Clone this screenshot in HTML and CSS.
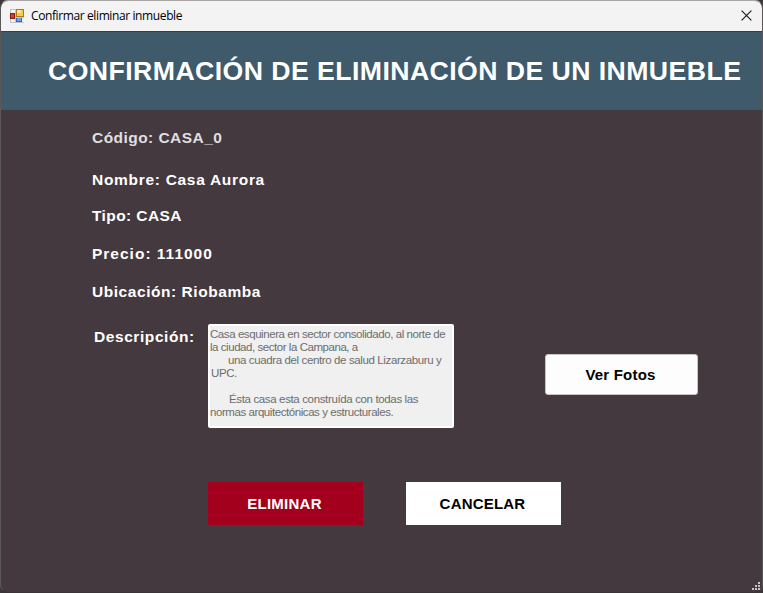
FILE: index.html
```html
<!DOCTYPE html>
<html lang="es">
<head>
<meta charset="utf-8">
<title>Confirmar eliminar inmueble</title>
<link rel="stylesheet" href="styles.css">
</head>
<body>
<div class="window">
  <div class="titlebar">
    <svg class="app-icon" width="14" height="14" viewBox="0 0 14 14" shape-rendering="crispEdges">
      <rect width="14" height="14" fill="#c4c4c4"/>
      <rect x="1" y="1" width="4" height="3" fill="#f4f4f4"/>
      <rect x="1" y="10" width="4" height="3" fill="#f4f4f4"/>
      <rect x="12" y="9" width="2" height="4" fill="#eeeeee"/>
      <rect x="0" y="4" width="5" height="6" fill="#8e1a12"/>
      <rect x="1" y="5" width="3" height="4" fill="#cf3e2c"/>
      <rect x="6" y="0" width="8" height="8" fill="#a87b14"/>
      <rect x="7" y="1" width="6" height="6" fill="#f9ca3a"/>
      <rect x="7" y="1" width="4" height="3" fill="#fde69a"/>
      <rect x="6" y="9" width="6" height="4" fill="#2e62c4"/>
      <rect x="7" y="9" width="4" height="3" fill="#6ea2ee"/>
    </svg>
    <span class="caption">Confirmar eliminar inmueble</span>
    <svg class="close" width="11" height="11" viewBox="0 0 11 11"><path d="M.6 .6L10.4 10.4M10.4 .6L.6 10.4" stroke="#1a1a1a" stroke-width="1.15"/></svg>
  </div>
  <header class="banner"><h1>CONFIRMACIÓN DE ELIMINACIÓN DE UN INMUEBLE</h1></header>
  <main class="content">
    <p class="field code">Código: CASA_0</p>
    <p class="field name">Nombre: Casa Aurora</p>
    <p class="field type">Tipo: CASA</p>
    <p class="field price">Precio: 111000</p>
    <p class="field place">Ubicación: Riobamba</p>
    <div class="details">
      <span class="field description-label">Descripción:</span>
      <div class="description">
        <div class="l1">Casa esquinera en sector consolidado, al norte de</div>
        <div class="l2">la ciudad, sector la Campana, a</div>
        <div class="l3">una cuadra del centro de salud Lizarzaburu y</div>
        <div class="l4">UPC.</div>
        <div class="l5">Ésta casa esta construída con todas las</div>
        <div class="l6">normas arquitectónicas y estructurales.</div>
      </div>
      <button class="photos">Ver Fotos</button>
    </div>
    <div class="actions">
      <button class="delete">ELIMINAR</button>
      <button class="cancel">CANCELAR</button>
    </div>
  </main>
  <svg class="grip" width="8" height="8" viewBox="0 0 8 8" fill="#c9c5c7" shape-rendering="crispEdges"><path d="M6 0h2v2h-2zM3 3h2v2h-2zM6 3h2v2h-2zM0 6h2v2h-2zM3 6h2v2h-2zM6 6h2v2h-2z"/></svg>
</div>
</body>
</html>
```
FILE: styles.css
```css
* { box-sizing: border-box; }
body {
  margin: 0;
  background: #3b3739;
  font-family: "Liberation Sans", Arial, sans-serif;
}
.window {
  position: relative;
  width: 763px;
  height: 593px;
  border: 1px solid #5b5658;
  border-top-color: #aaa6a8;
  border-bottom-color: #3b3337;
  border-radius: 8px;
  overflow: hidden;
  background: #44393e;
}
.titlebar {
  display: flex;
  align-items: center;
  height: 30px;
  padding: 0 10px 0 9px;
  background: #f3f3f3;
}
.caption {
  margin-left: 7px;
  font: 12px/16px "Open Sans", sans-serif;
  letter-spacing: -0.39px;
  color: #000;
}
.close { margin-left: auto; margin-top: -1px; }
.banner {
  height: 79px;
  padding: 24px 0 0 47px;
  background: #3e5a6b;
  border-top: 1px solid #44393e;
}
h1 {
  margin: 0;
  font-size: 26.67px;
  line-height: 30px;
  letter-spacing: 0.43px;
  white-space: nowrap;
  color: #fff;
}
.content { padding: 18px 0 0 91px; }
.field {
  margin: 0;
  font-size: 15.5px;
  line-height: 20px;
  font-weight: bold;
  white-space: nowrap;
  color: #fff;
}
.code { letter-spacing: 0.45px; margin-bottom: 22px; color: #e1dfe0; }
.name { letter-spacing: 0.7px; margin-bottom: 16px; }
.type { letter-spacing: 0.4px; margin-bottom: 18px; }
.price { letter-spacing: 1px; margin-bottom: 18px; }
.place { letter-spacing: 0.55px; margin-bottom: 22px; }
.details { display: flex; align-items: flex-start; height: 104px; }
.description-label {
  width: 116px;
  padding: 3px 0 0 2px;
  letter-spacing: 0.58px;
}
.description {
  width: 246px;
  height: 104px;
  padding: 2px 0 0;
  border: 2px solid #fff;
  border-radius: 2px;
  background: #f0f0f0;
  color: #6d6d6d;
  font-size: 11.5px;
  line-height: 13px;
  white-space: nowrap;
}
.l1 { letter-spacing: -0.43px; }
.l2 { letter-spacing: -0.45px; }
.l3 { padding-left: 18px; letter-spacing: -0.38px; }
.l4 { padding-left: 1px; letter-spacing: -0.4px; }
.l5 { padding-left: 19px; margin-top: 13px; letter-spacing: -0.36px; }
.l6 { letter-spacing: -0.43px; }
button {
  padding: 0;
  border: 0;
  font: bold 15px/20px "Liberation Sans", Arial, sans-serif;
  letter-spacing: 0.2px;
  color: #000;
  background: #fff;
}
.photos {
  width: 153px;
  height: 41px;
  margin: 30px 0 0 91px;
  padding-right: 2px;
  border: 1px solid #c9c5c7;
  border-radius: 3px;
  background: #fdfdfd;
}
.actions { display: flex; gap: 43px; margin: 54px 0 0 116px; }
.actions button { width: 155px; height: 43px; padding-right: 2px; }
.actions .delete { color: #fff; background: #a2001d; letter-spacing: 0.25px; }
.grip { position: absolute; right: 2px; bottom: 2px; }
```
